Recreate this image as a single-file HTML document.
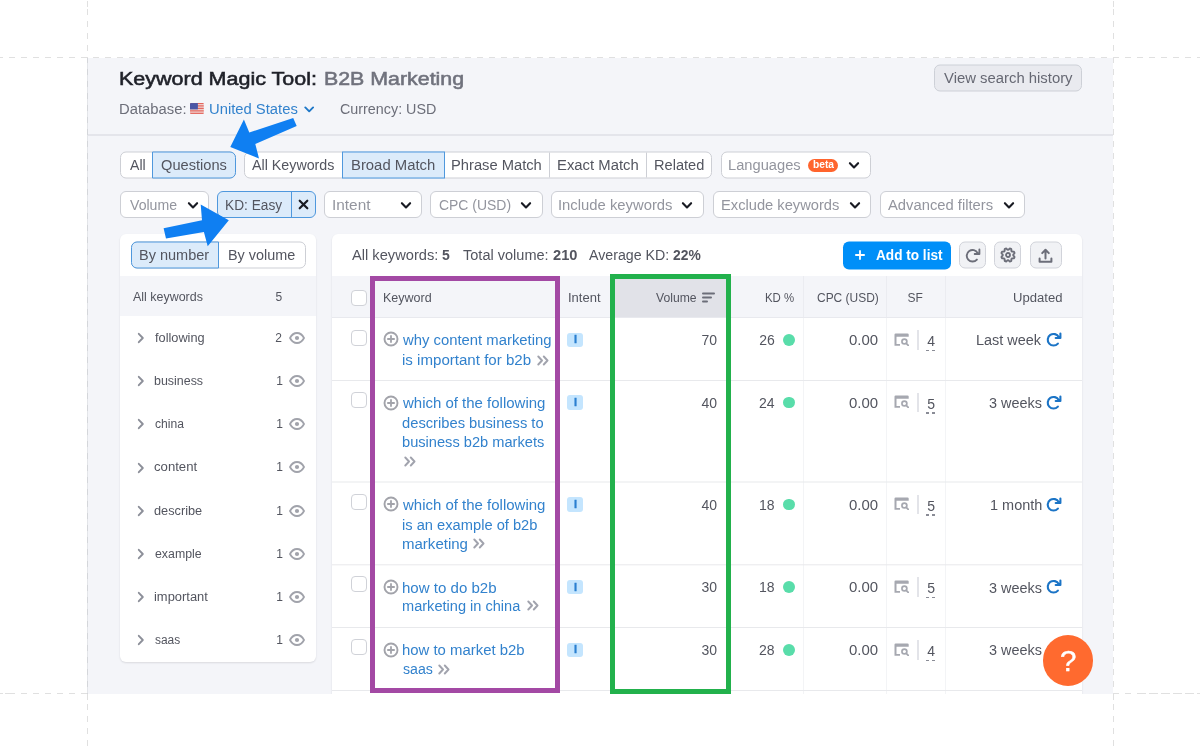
<!DOCTYPE html>
<html lang="en"><head><meta charset="utf-8"><title>Keyword Magic Tool: B2B Marketing</title>
<style>
html,body{margin:0;padding:0;background:#fff;}
body{width:1200px;height:752px;position:relative;overflow:hidden;font-family:"Liberation Sans",sans-serif;}
.root{position:absolute;left:0;top:0;width:1200px;height:752px;will-change:transform;}
.b{position:absolute;box-sizing:border-box;display:block;}
.t{position:absolute;white-space:nowrap;line-height:1;}

.in{background:#fff;border:1px solid #cdcfd5;border-radius:6px;}
.act{background:#dcebfa;border:1px solid #4f98dd;}
.sep{background:#cdcfd5;width:1px;}

</style></head><body><div class="root">
<div class="b" style="left:0px;top:57px;width:1200px;height:1px;background:repeating-linear-gradient(90deg,#e0e0e0 0 6px,transparent 6px 12px);background-position:9px 0;"></div>
<div class="b" style="left:0px;top:693px;width:1200px;height:1px;background:repeating-linear-gradient(90deg,#e0e0e0 0 6px,transparent 6px 12px);background-position:9px 0;"></div>
<div class="b" style="left:87px;top:0px;width:1px;height:752px;background:repeating-linear-gradient(180deg,#e0e0e0 0 6px,transparent 6px 12px);background-position:0 9px;"></div>
<div class="b" style="left:1113px;top:0px;width:1px;height:752px;background:repeating-linear-gradient(180deg,#e0e0e0 0 6px,transparent 6px 12px);background-position:0 9px;"></div>
<div class="b" style="left:87px;top:58px;width:1px;height:636px;background:rgba(200,203,212,.5);"></div>
<div class="b" style="left:88px;top:58px;width:1025px;height:636px;background:#f4f5f9;"></div>
<div class="b" style="left:88px;top:134px;width:1025px;height:2px;background:#e4e5eb;"></div>
<span class="t " style="top:69.76px;font-size:18px;color:#1f2129;left:119.18px;transform:scaleX(1.1941);transform-origin:0 0;-webkit-text-stroke:0.55px #1f2129;">Keyword Magic Tool:</span>
<span class="t " style="top:69.76px;font-size:18px;color:#70727d;left:323.59px;transform:scaleX(1.1865);transform-origin:0 0;-webkit-text-stroke:0.55px #70727d;">B2B Marketing</span>
<span class="t " style="top:102.35px;font-size:14px;color:#6c6e79;left:118.82px;transform:scaleX(1.0576);transform-origin:0 0;">Database:</span>
<svg class="b" style="left:190.3px;top:103.3px;border-radius:1px;" width="13.8" height="11" viewBox="0 0 14 11"><rect width="14" height="11" fill="#f3f3f3"/><rect y="0.00" width="14" height="0.95" fill="#e25950"/><rect y="1.70" width="14" height="0.95" fill="#e25950"/><rect y="3.40" width="14" height="0.95" fill="#e25950"/><rect y="5.10" width="14" height="0.95" fill="#e25950"/><rect y="6.80" width="14" height="0.95" fill="#e25950"/><rect y="8.50" width="14" height="0.95" fill="#e25950"/><rect y="10.20" width="14" height="0.95" fill="#e25950"/><rect width="8" height="6.4" fill="#4a56a6"/></svg>
<span class="t " style="top:102.35px;font-size:14px;color:#3282cd;left:208.71px;transform:scaleX(1.0563);transform-origin:0 0;">United States</span>
<svg class="b" style="left:304px;top:105.6px;" width="10.4" height="7" viewBox="0 0 10.4 7"><path d="M1.3 1.4 L5.2 5.3 L9.1 1.4" fill="none" stroke="#1f78c8" stroke-width="1.9" stroke-linecap="round" stroke-linejoin="round"/></svg>
<span class="t " style="top:102.35px;font-size:14px;color:#6c6e79;left:340.28px;transform:scaleX(1.0235);transform-origin:0 0;">Currency: USD</span>
<div class="b" style="left:934px;top:64px;width:148px;height:27px;background:#e9eaef;border:1px solid #cdd0d7;border-radius:6px;transform:translateY(.5px);"></div>
<span class="t " style="top:70.65px;font-size:14px;color:#666873;left:944.0px;transform:scaleX(1.0611);transform-origin:0 0;">View search history</span>
<div class="b in" style="left:120px;top:151px;width:116px;height:27px;transform:translateY(.5px);"></div>
<div class="b act" style="left:152px;top:151px;width:84px;height:27px;border-radius:0 6px 6px 0;transform:translateY(.5px);"></div>
<span class="t " style="top:157.65px;font-size:14px;color:#53555f;left:129.6px;transform:scaleX(1.0068);transform-origin:0 0;">All</span>
<span class="t " style="top:157.65px;font-size:14px;color:#53555f;left:161.01px;transform:scaleX(1.0448);transform-origin:0 0;">Questions</span>
<div class="b in" style="left:244px;top:151px;width:468px;height:27px;transform:translateY(.5px);"></div>
<div class="b act" style="left:342px;top:151px;width:102.5px;height:27px;transform:translateY(.5px);"></div>
<div class="b sep" style="left:549px;top:152px;width:1px;height:25px;transform:translateY(.5px);"></div>
<div class="b sep" style="left:646px;top:152px;width:1px;height:25px;transform:translateY(.5px);"></div>
<span class="t " style="top:157.65px;font-size:14px;color:#53555f;left:252.4px;transform:scaleX(1.0186);transform-origin:0 0;">All Keywords</span>
<span class="t " style="top:157.65px;font-size:14px;color:#53555f;left:351.21px;transform:scaleX(1.0611);transform-origin:0 0;">Broad Match</span>
<span class="t " style="top:157.65px;font-size:14px;color:#53555f;left:450.82px;transform:scaleX(1.0513);transform-origin:0 0;">Phrase Match</span>
<span class="t " style="top:157.65px;font-size:14px;color:#53555f;left:556.81px;transform:scaleX(1.0608);transform-origin:0 0;">Exact Match</span>
<span class="t " style="top:157.65px;font-size:14px;color:#53555f;left:654.23px;transform:scaleX(1.0433);transform-origin:0 0;">Related</span>
<div class="b in" style="left:721px;top:151px;width:149.5px;height:27px;transform:translateY(.5px);"></div>
<span class="t " style="top:157.65px;font-size:14px;color:#93959e;left:728.22px;transform:scaleX(1.0493);transform-origin:0 0;">Languages</span>
<div class="b" style="left:808.4px;top:158.5px;width:30.0px;height:13.3px;background:#ff642d;border-radius:7px;"></div>
<span class="t " style="top:160.44px;font-size:10px;color:#fff;font-weight:700;left:812.59px;transform:scaleX(1.0249);transform-origin:0 0;">beta</span>
<svg class="b" style="left:848px;top:160.8px;" width="12" height="9" viewBox="0 0 12 9"><path d="M1.9 2.2 L6 6.4 L10.1 2.2" fill="none" stroke="#191b23" stroke-width="2.1" stroke-linecap="round" stroke-linejoin="round"/></svg>
<div class="b in" style="left:120px;top:191px;width:88.6px;height:27px;"></div>
<span class="t " style="top:197.65px;font-size:14px;color:#93959e;left:129.6px;transform:scaleX(1.0074);transform-origin:0 0;">Volume</span>
<svg class="b" style="left:186.7px;top:200.8px;" width="12" height="9" viewBox="0 0 12 9"><path d="M1.9 2.2 L6 6.4 L10.1 2.2" fill="none" stroke="#191b23" stroke-width="2.1" stroke-linecap="round" stroke-linejoin="round"/></svg>
<div class="b act" style="left:217px;top:191px;width:99px;height:27px;border-radius:6px;"></div>
<div class="b" style="left:291px;top:191px;width:1px;height:27px;background:#4f98dd;"></div>
<span class="t " style="top:197.65px;font-size:14px;color:#53555f;left:225.3px;transform:scaleX(0.978);transform-origin:0 0;">KD: Easy</span>
<svg class="b" style="left:298px;top:199.1px;" width="11" height="11" viewBox="0 0 11 11"><path d="M1.7 1.7 L9.3 9.3 M9.3 1.7 L1.7 9.3" stroke="#191b23" stroke-width="2.2" stroke-linecap="round"/></svg>
<div class="b in" style="left:324.2px;top:191px;width:97.8px;height:27px;"></div>
<span class="t " style="top:197.65px;font-size:14px;color:#93959e;left:332.12px;transform:scaleX(1.0982);transform-origin:0 0;">Intent</span>
<svg class="b" style="left:399.6px;top:200.8px;" width="12" height="9" viewBox="0 0 12 9"><path d="M1.9 2.2 L6 6.4 L10.1 2.2" fill="none" stroke="#191b23" stroke-width="2.1" stroke-linecap="round" stroke-linejoin="round"/></svg>
<div class="b in" style="left:430.4px;top:191px;width:112.3px;height:27px;"></div>
<span class="t " style="top:197.65px;font-size:14px;color:#93959e;left:438.9px;transform:scaleX(0.9958);transform-origin:0 0;">CPC (USD)</span>
<svg class="b" style="left:520px;top:200.8px;" width="12" height="9" viewBox="0 0 12 9"><path d="M1.9 2.2 L6 6.4 L10.1 2.2" fill="none" stroke="#191b23" stroke-width="2.1" stroke-linecap="round" stroke-linejoin="round"/></svg>
<div class="b in" style="left:551px;top:191px;width:153.4px;height:27px;"></div>
<span class="t " style="top:197.65px;font-size:14px;color:#93959e;left:558.27px;transform:scaleX(1.0588);transform-origin:0 0;">Include keywords</span>
<svg class="b" style="left:681.4px;top:200.8px;" width="12" height="9" viewBox="0 0 12 9"><path d="M1.9 2.2 L6 6.4 L10.1 2.2" fill="none" stroke="#191b23" stroke-width="2.1" stroke-linecap="round" stroke-linejoin="round"/></svg>
<div class="b in" style="left:713px;top:191px;width:158px;height:27px;"></div>
<span class="t " style="top:197.65px;font-size:14px;color:#93959e;left:720.73px;transform:scaleX(1.0485);transform-origin:0 0;">Exclude keywords</span>
<svg class="b" style="left:849px;top:200.8px;" width="12" height="9" viewBox="0 0 12 9"><path d="M1.9 2.2 L6 6.4 L10.1 2.2" fill="none" stroke="#191b23" stroke-width="2.1" stroke-linecap="round" stroke-linejoin="round"/></svg>
<div class="b in" style="left:880px;top:191px;width:145px;height:27px;"></div>
<span class="t " style="top:197.65px;font-size:14px;color:#93959e;left:888.4px;transform:scaleX(1.0553);transform-origin:0 0;">Advanced filters</span>
<svg class="b" style="left:1003px;top:200.8px;" width="12" height="9" viewBox="0 0 12 9"><path d="M1.9 2.2 L6 6.4 L10.1 2.2" fill="none" stroke="#191b23" stroke-width="2.1" stroke-linecap="round" stroke-linejoin="round"/></svg>
<div class="b" style="left:120px;top:234px;width:196px;height:427.5px;background:#fff;border-radius:6px;box-shadow:0 1px 2px rgba(25,27,35,.12);"></div>
<div class="b in" style="left:131px;top:241px;width:175px;height:27px;transform:translateY(.5px);"></div>
<div class="b act" style="left:131px;top:241px;width:87.9px;height:27px;border-radius:6px 0 0 6px;transform:translateY(.5px);"></div>
<span class="t " style="top:247.95px;font-size:14px;color:#53555f;left:139.24px;transform:scaleX(1.0368);transform-origin:0 0;">By number</span>
<span class="t " style="top:247.95px;font-size:14px;color:#53555f;left:228.05px;transform:scaleX(1.0289);transform-origin:0 0;">By volume</span>
<div class="b" style="left:120px;top:276px;width:196px;height:40px;background:#f4f5f9;"></div>
<span class="t " style="top:290.84px;font-size:12px;color:#53555f;left:133.0px;transform:scaleX(1.0379);transform-origin:0 0;">All keywords</span>
<span class="t " style="top:290.84px;font-size:12px;color:#53555f;left:275.39px;">5</span>
<svg class="b" style="left:136.6px;top:332.2px;" width="8" height="12" viewBox="0 0 8 12"><path d="M1.8 1.8 L5.8 6 L1.8 10.2" fill="none" stroke="#8c8f99" stroke-width="1.9" stroke-linecap="round" stroke-linejoin="round"/></svg>
<span class="t " style="top:332.04px;font-size:12px;color:#53555f;left:154.87px;transform:scaleX(1.063);transform-origin:0 0;">following</span>
<span class="t " style="top:332.04px;font-size:12px;color:#53555f;left:275.29px;">2</span>
<svg class="b" style="left:288.5px;top:332.0px;" width="16" height="12" viewBox="0 0 16 12"><path d="M1 6 C3 2.2 6 1 8 1 C10 1 13 2.2 15 6 C13 9.8 10 11 8 11 C6 11 3 9.8 1 6 Z" fill="none" stroke="#a1a3ab" stroke-width="1.8"/><circle cx="8" cy="6" r="2.1" fill="#a1a3ab"/></svg>
<svg class="b" style="left:136.6px;top:375.34px;" width="8" height="12" viewBox="0 0 8 12"><path d="M1.8 1.8 L5.8 6 L1.8 10.2" fill="none" stroke="#8c8f99" stroke-width="1.9" stroke-linecap="round" stroke-linejoin="round"/></svg>
<span class="t " style="top:375.18px;font-size:12px;color:#53555f;left:154.25px;transform:scaleX(1.0363);transform-origin:0 0;">business</span>
<span class="t " style="top:375.18px;font-size:12px;color:#53555f;left:276.17px;">1</span>
<svg class="b" style="left:288.5px;top:375.14px;" width="16" height="12" viewBox="0 0 16 12"><path d="M1 6 C3 2.2 6 1 8 1 C10 1 13 2.2 15 6 C13 9.8 10 11 8 11 C6 11 3 9.8 1 6 Z" fill="none" stroke="#a1a3ab" stroke-width="1.8"/><circle cx="8" cy="6" r="2.1" fill="#a1a3ab"/></svg>
<svg class="b" style="left:136.6px;top:418.48px;" width="8" height="12" viewBox="0 0 8 12"><path d="M1.8 1.8 L5.8 6 L1.8 10.2" fill="none" stroke="#8c8f99" stroke-width="1.9" stroke-linecap="round" stroke-linejoin="round"/></svg>
<span class="t " style="top:418.32px;font-size:12px;color:#53555f;left:154.51px;transform:scaleX(1.0106);transform-origin:0 0;">china</span>
<span class="t " style="top:418.32px;font-size:12px;color:#53555f;left:276.17px;">1</span>
<svg class="b" style="left:288.5px;top:418.28px;" width="16" height="12" viewBox="0 0 16 12"><path d="M1 6 C3 2.2 6 1 8 1 C10 1 13 2.2 15 6 C13 9.8 10 11 8 11 C6 11 3 9.8 1 6 Z" fill="none" stroke="#a1a3ab" stroke-width="1.8"/><circle cx="8" cy="6" r="2.1" fill="#a1a3ab"/></svg>
<svg class="b" style="left:136.6px;top:461.62px;" width="8" height="12" viewBox="0 0 8 12"><path d="M1.8 1.8 L5.8 6 L1.8 10.2" fill="none" stroke="#8c8f99" stroke-width="1.9" stroke-linecap="round" stroke-linejoin="round"/></svg>
<span class="t " style="top:461.46px;font-size:12px;color:#53555f;left:154.47px;transform:scaleX(1.0965);transform-origin:0 0;">content</span>
<span class="t " style="top:461.46px;font-size:12px;color:#53555f;left:276.17px;">1</span>
<svg class="b" style="left:288.5px;top:461.42px;" width="16" height="12" viewBox="0 0 16 12"><path d="M1 6 C3 2.2 6 1 8 1 C10 1 13 2.2 15 6 C13 9.8 10 11 8 11 C6 11 3 9.8 1 6 Z" fill="none" stroke="#a1a3ab" stroke-width="1.8"/><circle cx="8" cy="6" r="2.1" fill="#a1a3ab"/></svg>
<svg class="b" style="left:136.6px;top:504.76px;" width="8" height="12" viewBox="0 0 8 12"><path d="M1.8 1.8 L5.8 6 L1.8 10.2" fill="none" stroke="#8c8f99" stroke-width="1.9" stroke-linecap="round" stroke-linejoin="round"/></svg>
<span class="t " style="top:504.6px;font-size:12px;color:#53555f;left:154.49px;transform:scaleX(1.0614);transform-origin:0 0;">describe</span>
<span class="t " style="top:504.6px;font-size:12px;color:#53555f;left:276.17px;">1</span>
<svg class="b" style="left:288.5px;top:504.56px;" width="16" height="12" viewBox="0 0 16 12"><path d="M1 6 C3 2.2 6 1 8 1 C10 1 13 2.2 15 6 C13 9.8 10 11 8 11 C6 11 3 9.8 1 6 Z" fill="none" stroke="#a1a3ab" stroke-width="1.8"/><circle cx="8" cy="6" r="2.1" fill="#a1a3ab"/></svg>
<svg class="b" style="left:136.6px;top:547.9px;" width="8" height="12" viewBox="0 0 8 12"><path d="M1.8 1.8 L5.8 6 L1.8 10.2" fill="none" stroke="#8c8f99" stroke-width="1.9" stroke-linecap="round" stroke-linejoin="round"/></svg>
<span class="t " style="top:547.74px;font-size:12px;color:#53555f;left:154.51px;transform:scaleX(1.0276);transform-origin:0 0;">example</span>
<span class="t " style="top:547.74px;font-size:12px;color:#53555f;left:276.17px;">1</span>
<svg class="b" style="left:288.5px;top:547.7px;" width="16" height="12" viewBox="0 0 16 12"><path d="M1 6 C3 2.2 6 1 8 1 C10 1 13 2.2 15 6 C13 9.8 10 11 8 11 C6 11 3 9.8 1 6 Z" fill="none" stroke="#a1a3ab" stroke-width="1.8"/><circle cx="8" cy="6" r="2.1" fill="#a1a3ab"/></svg>
<svg class="b" style="left:136.6px;top:591.04px;" width="8" height="12" viewBox="0 0 8 12"><path d="M1.8 1.8 L5.8 6 L1.8 10.2" fill="none" stroke="#8c8f99" stroke-width="1.9" stroke-linecap="round" stroke-linejoin="round"/></svg>
<span class="t " style="top:590.88px;font-size:12px;color:#53555f;left:154.22px;transform:scaleX(1.0772);transform-origin:0 0;">important</span>
<span class="t " style="top:590.88px;font-size:12px;color:#53555f;left:276.17px;">1</span>
<svg class="b" style="left:288.5px;top:590.84px;" width="16" height="12" viewBox="0 0 16 12"><path d="M1 6 C3 2.2 6 1 8 1 C10 1 13 2.2 15 6 C13 9.8 10 11 8 11 C6 11 3 9.8 1 6 Z" fill="none" stroke="#a1a3ab" stroke-width="1.8"/><circle cx="8" cy="6" r="2.1" fill="#a1a3ab"/></svg>
<svg class="b" style="left:136.6px;top:634.18px;" width="8" height="12" viewBox="0 0 8 12"><path d="M1.8 1.8 L5.8 6 L1.8 10.2" fill="none" stroke="#8c8f99" stroke-width="1.9" stroke-linecap="round" stroke-linejoin="round"/></svg>
<span class="t " style="top:634.02px;font-size:12px;color:#53555f;left:154.64px;transform:scaleX(0.9959);transform-origin:0 0;">saas</span>
<span class="t " style="top:634.02px;font-size:12px;color:#53555f;left:276.17px;">1</span>
<svg class="b" style="left:288.5px;top:633.98px;" width="16" height="12" viewBox="0 0 16 12"><path d="M1 6 C3 2.2 6 1 8 1 C10 1 13 2.2 15 6 C13 9.8 10 11 8 11 C6 11 3 9.8 1 6 Z" fill="none" stroke="#a1a3ab" stroke-width="1.8"/><circle cx="8" cy="6" r="2.1" fill="#a1a3ab"/></svg>
<div class="b" style="left:332px;top:234px;width:750px;height:466px;background:#fff;border-radius:6px 6px 0 0;box-shadow:0 1px 2px rgba(25,27,35,.12);"></div>
<span class="t " style="top:248.15px;font-size:14px;color:#53555f;left:352.0px;transform:scaleX(1.0468);transform-origin:0 0;">All keywords:</span>
<span class="t " style="top:248.15px;font-size:14px;color:#53555f;font-weight:700;left:441.88px;">5</span>
<span class="t " style="top:248.15px;font-size:14px;color:#53555f;left:463.31px;transform:scaleX(1.0381);transform-origin:0 0;">Total volume:</span>
<span class="t " style="top:248.15px;font-size:14px;color:#53555f;font-weight:700;left:552.56px;transform:scaleX(1.0446);transform-origin:0 0;">210</span>
<span class="t " style="top:248.15px;font-size:14px;color:#53555f;left:589.0px;transform:scaleX(1.0149);transform-origin:0 0;">Average KD:</span>
<span class="t " style="top:248.15px;font-size:14px;color:#53555f;font-weight:700;left:672.58px;transform:scaleX(0.989);transform-origin:0 0;">22%</span>
<div class="b" style="left:843px;top:241px;width:108.4px;height:27.7px;background:#008ff8;border-radius:6px;transform:translateY(.5px);"></div>
<svg class="b" style="left:855px;top:249.9px;" width="10" height="10" viewBox="0 0 10 10"><path d="M5 0.9 V9.1 M0.9 5 H9.1" stroke="#fff" stroke-width="1.8" stroke-linecap="round"/></svg>
<span class="t " style="top:247.85px;font-size:14px;color:#fff;font-weight:700;left:876.13px;transform:scaleX(0.972);transform-origin:0 0;">Add to list</span>
<div class="b" style="left:959.2px;top:241px;width:26.8px;height:27px;background:#f1f2f5;border:1px solid #d1d3da;border-radius:6px;transform:translateY(.5px);"></div>
<div class="b" style="left:994.4px;top:241px;width:27.1px;height:27px;background:#f1f2f5;border:1px solid #d1d3da;border-radius:6px;transform:translateY(.5px);"></div>
<div class="b" style="left:1029.6px;top:241px;width:32.2px;height:27px;background:#f1f2f5;border:1px solid #d1d3da;border-radius:6px;transform:translateY(.5px);"></div>
<svg class="b" style="left:964.7px;top:247.7px;" width="16" height="16" viewBox="0 0 16 16"><path d="M11.9 11.6 A5.8 5.8 0 1 1 12.7 5.1 M14.4 1.5 V6 H9.7" fill="none" stroke="#6c6e79" stroke-width="1.9" stroke-linecap="round" stroke-linejoin="round"/></svg>
<svg class="b" style="left:1000px;top:247.3px;" width="16" height="16" viewBox="0 0 16 16"><path d="M14.28 10.60 L14.18 10.85 L14.06 11.09 L13.86 11.28 L13.45 11.34 L13.03 11.36 L12.61 11.35 L12.23 11.34 L12.03 11.44 L11.89 11.60 L11.75 11.75 L11.60 11.89 L11.44 12.03 L11.34 12.23 L11.35 12.61 L11.36 13.03 L11.34 13.45 L11.28 13.86 L11.09 14.06 L10.85 14.18 L10.60 14.28 L10.35 14.38 L10.10 14.47 L9.82 14.46 L9.49 14.22 L9.18 13.93 L8.89 13.63 L8.63 13.35 L8.42 13.28 L8.21 13.30 L8.00 13.30 L7.79 13.30 L7.58 13.28 L7.37 13.35 L7.11 13.63 L6.82 13.93 L6.51 14.22 L6.18 14.46 L5.90 14.47 L5.65 14.38 L5.40 14.28 L5.15 14.18 L4.91 14.06 L4.72 13.86 L4.66 13.45 L4.64 13.03 L4.65 12.61 L4.66 12.23 L4.56 12.03 L4.40 11.89 L4.25 11.75 L4.11 11.60 L3.97 11.44 L3.77 11.34 L3.39 11.35 L2.97 11.36 L2.55 11.34 L2.14 11.28 L1.94 11.09 L1.82 10.85 L1.72 10.60 L1.62 10.35 L1.53 10.10 L1.54 9.82 L1.78 9.49 L2.07 9.18 L2.37 8.89 L2.65 8.63 L2.72 8.42 L2.70 8.21 L2.70 8.00 L2.70 7.79 L2.72 7.58 L2.65 7.37 L2.37 7.11 L2.07 6.82 L1.78 6.51 L1.54 6.18 L1.53 5.90 L1.62 5.65 L1.72 5.40 L1.82 5.15 L1.94 4.91 L2.14 4.72 L2.55 4.66 L2.97 4.64 L3.39 4.65 L3.77 4.66 L3.97 4.56 L4.11 4.40 L4.25 4.25 L4.40 4.11 L4.56 3.97 L4.66 3.77 L4.65 3.39 L4.64 2.97 L4.66 2.55 L4.72 2.14 L4.91 1.94 L5.15 1.82 L5.40 1.72 L5.65 1.62 L5.90 1.53 L6.18 1.54 L6.51 1.78 L6.82 2.07 L7.11 2.37 L7.37 2.65 L7.58 2.72 L7.79 2.70 L8.00 2.70 L8.21 2.70 L8.42 2.72 L8.63 2.65 L8.89 2.37 L9.18 2.07 L9.49 1.78 L9.82 1.54 L10.10 1.53 L10.35 1.62 L10.60 1.72 L10.85 1.82 L11.09 1.94 L11.28 2.14 L11.34 2.55 L11.36 2.97 L11.35 3.39 L11.34 3.77 L11.44 3.97 L11.60 4.11 L11.75 4.25 L11.89 4.40 L12.03 4.56 L12.23 4.66 L12.61 4.65 L13.03 4.64 L13.45 4.66 L13.86 4.72 L14.06 4.91 L14.18 5.15 L14.28 5.40 L14.38 5.65 L14.47 5.90 L14.46 6.18 L14.22 6.51 L13.93 6.82 L13.63 7.11 L13.35 7.37 L13.28 7.58 L13.30 7.79 L13.30 8.00 L13.30 8.21 L13.28 8.42 L13.35 8.63 L13.63 8.89 L13.93 9.18 L14.22 9.49 L14.46 9.82 L14.47 10.10 L14.38 10.35 Z" fill="none" stroke="#6c6e79" stroke-width="1.9" stroke-linejoin="round"/><circle cx="8" cy="8" r="2" fill="none" stroke="#6c6e79" stroke-width="1.8"/></svg>
<svg class="b" style="left:1037.5px;top:247.5px;" width="15" height="16" viewBox="0 0 15 16"><path d="M7.5 10.5 V2 M4.2 5.1 L7.5 1.8 L10.8 5.1 M1.6 10.6 V13.8 H13.4 V10.6" fill="none" stroke="#6c6e79" stroke-width="2" stroke-linecap="round" stroke-linejoin="round"/></svg>
<div class="b" style="left:332px;top:276px;width:750px;height:42px;background:#f4f5f9;"></div>
<div class="b" style="left:615px;top:276px;width:111px;height:42px;background:#e1e2e8;"></div>
<span class="t " style="top:291.84px;font-size:12px;color:#53555f;left:382.6px;transform:scaleX(1.0428);transform-origin:0 0;">Keyword</span>
<span class="t " style="top:291.84px;font-size:12px;color:#53555f;left:568.23px;transform:scaleX(1.0833);transform-origin:0 0;">Intent</span>
<span class="t " style="top:291.84px;font-size:12px;color:#53555f;left:656.4px;transform:scaleX(1.0132);transform-origin:0 0;">Volume</span>
<svg class="b" style="left:702px;top:291.5px;" width="13" height="11" viewBox="0 0 13 11"><path d="M1 1.5 H12 M1 5.5 H9 M1 9.5 H5" stroke="#6c6e79" stroke-width="2" stroke-linecap="round"/></svg>
<span class="t " style="top:291.84px;font-size:12px;color:#53555f;left:765.49px;transform:scaleX(0.9524);transform-origin:0 0;">KD %</span>
<span class="t " style="top:291.84px;font-size:12px;color:#53555f;left:817.0px;transform:scaleX(0.9967);transform-origin:0 0;">CPC (USD)</span>
<span class="t " style="top:291.84px;font-size:12px;color:#53555f;left:907.46px;">SF</span>
<span class="t " style="top:291.84px;font-size:12px;color:#53555f;left:1013.08px;transform:scaleX(1.0897);transform-origin:0 0;">Updated</span>
<div class="b" style="left:803px;top:276px;width:1px;height:42px;background:#ebecf1;"></div>
<div class="b" style="left:803px;top:318px;width:1px;height:376px;background:#f3f4f6;"></div>
<div class="b" style="left:886px;top:276px;width:1px;height:42px;background:#ebecf1;"></div>
<div class="b" style="left:886px;top:318px;width:1px;height:376px;background:#f3f4f6;"></div>
<div class="b" style="left:944.8px;top:276px;width:1.0px;height:42px;background:#ebecf1;"></div>
<div class="b" style="left:944.8px;top:318px;width:1.0px;height:376px;background:#f3f4f6;"></div>
<div class="b" style="left:351.3px;top:290.2px;width:15.5px;height:16.0px;background:#fff;border:1px solid #d0d2d8;border-radius:4px;"></div>
<div class="b" style="left:332px;top:317px;width:750px;height:1px;background:#e8e9ee;"></div>
<div class="b" style="left:332px;top:380px;width:750px;height:1px;background:#e8e9ec;"></div>
<div class="b" style="left:351.3px;top:329.7px;width:15.5px;height:16.0px;background:#fff;border:1px solid #d0d2d8;border-radius:4px;"></div>
<svg class="b" style="left:383px;top:330.8px;" width="16" height="16" viewBox="0 0 16 16"><circle cx="8" cy="8" r="6.5" fill="none" stroke="#a2a3aa" stroke-width="1.9"/><path d="M8 4.9 V11.1 M4.9 8 H11.1" stroke="#a2a3aa" stroke-width="1.8" stroke-linecap="round"/></svg>
<span class="t " style="top:333.45px;font-size:14px;color:#3282cd;left:403.0px;transform:scaleX(1.0606);transform-origin:0 0;">why content marketing</span>
<span class="t " style="top:353.25px;font-size:14px;color:#3282cd;left:402.1px;transform:scaleX(1.0773);transform-origin:0 0;">is important for b2b</span>
<svg class="b" style="left:536.6px;top:354.5px;" width="12" height="11" viewBox="0 0 12 11"><path d="M1.3 1.5 L5 5.5 L1.3 9.5 M6.8 1.5 L10.5 5.5 L6.8 9.5" fill="none" stroke="#a1a3ad" stroke-width="1.9" stroke-linecap="round" stroke-linejoin="round"/></svg>
<div class="b" style="left:567.3px;top:332.6px;width:16.0px;height:14.4px;background:#c4e5fe;border-radius:3px;"></div>
<span class="t " style="top:334.39px;font-size:11px;color:#2a7fd0;font-weight:700;left:574.02px;-webkit-text-stroke:0.35px #2a7fd0;">I</span>
<span class="t " style="top:332.95px;font-size:14px;color:#53555f;right:482.95px;">70</span>
<span class="t " style="top:332.95px;font-size:14px;color:#53555f;left:759.16px;">26</span>
<div class="b" style="left:783.1px;top:333.9px;width:11.9px;height:11.9px;background:#59ddaa;border-radius:50%;"></div>
<span class="t " style="top:332.95px;font-size:14px;color:#53555f;left:849.4px;transform:scaleX(1.0695);transform-origin:0 0;">0.00</span>
<svg class="b" style="left:894px;top:332.7px;" width="15" height="13" viewBox="0 0 15 13"><path d="M0.5 1.6 Q0.5 0.4 1.7 0.4 H13.5 Q14.7 0.4 14.7 1.6 V3.7 H2.5 V11 H6 V12.7 H0.5 Z" fill="#a6a8b0"/><circle cx="10.4" cy="8.5" r="2.45" fill="none" stroke="#a6a8b0" stroke-width="1.7"/><path d="M12.2 10.4 L14.2 12.3" stroke="#a6a8b0" stroke-width="1.8" stroke-linecap="round"/></svg>
<div class="b" style="left:917.1px;top:330.1px;width:2.0px;height:19.7px;background:#e3e4e9;"></div>
<span class="t " style="top:333.95px;font-size:14px;color:#53555f;left:927.3px;">4</span>
<div class="b" style="left:926.3px;top:349.5px;width:9.3px;height:1.5px;background:repeating-linear-gradient(90deg,#8a8c96 0 3.3px,transparent 3.3px 6px);"></div>
<span class="t " style="top:333.45px;font-size:14px;color:#53555f;left:976.34px;transform:scaleX(1.0326);transform-origin:0 0;">Last week</span>
<svg class="b" style="left:1046px;top:332.1px;" width="16" height="16" viewBox="0 0 16 16"><path d="M11.9 11.6 A5.8 5.8 0 1 1 12.7 5.1 M14.4 1.5 V6 H9.7" fill="none" stroke="#1b74c6" stroke-width="2.1" stroke-linecap="round" stroke-linejoin="round"/></svg>
<div class="b" style="left:332px;top:481px;width:750px;height:1px;background:#e8e9ec;transform:translateY(0.5px);"></div>
<div class="b" style="left:351.3px;top:391.7px;width:15.5px;height:16.0px;background:#fff;border:1px solid #d0d2d8;border-radius:4px;"></div>
<svg class="b" style="left:383px;top:394.6px;" width="16" height="16" viewBox="0 0 16 16"><circle cx="8" cy="8" r="6.5" fill="none" stroke="#a2a3aa" stroke-width="1.9"/><path d="M8 4.9 V11.1 M4.9 8 H11.1" stroke="#a2a3aa" stroke-width="1.8" stroke-linecap="round"/></svg>
<span class="t " style="top:396.05px;font-size:14px;color:#3282cd;left:403.0px;transform:scaleX(1.0699);transform-origin:0 0;">which of the following</span>
<span class="t " style="top:415.85px;font-size:14px;color:#3282cd;left:402.41px;transform:scaleX(1.052);transform-origin:0 0;">describes business to</span>
<span class="t " style="top:435.35px;font-size:14px;color:#3282cd;left:402.12px;transform:scaleX(1.0448);transform-origin:0 0;">business b2b markets</span>
<svg class="b" style="left:404px;top:455.6px;" width="12" height="11" viewBox="0 0 12 11"><path d="M1.3 1.5 L5 5.5 L1.3 9.5 M6.8 1.5 L10.5 5.5 L6.8 9.5" fill="none" stroke="#a1a3ad" stroke-width="1.9" stroke-linecap="round" stroke-linejoin="round"/></svg>
<div class="b" style="left:567.3px;top:395.2px;width:16.0px;height:14.4px;background:#c4e5fe;border-radius:3px;"></div>
<span class="t " style="top:396.99px;font-size:11px;color:#2a7fd0;font-weight:700;left:574.02px;-webkit-text-stroke:0.35px #2a7fd0;">I</span>
<span class="t " style="top:395.55px;font-size:14px;color:#53555f;right:482.95px;">40</span>
<span class="t " style="top:395.55px;font-size:14px;color:#53555f;left:759.02px;">24</span>
<div class="b" style="left:783.1px;top:396.5px;width:11.9px;height:11.9px;background:#59ddaa;border-radius:50%;"></div>
<span class="t " style="top:395.55px;font-size:14px;color:#53555f;left:849.4px;transform:scaleX(1.0695);transform-origin:0 0;">0.00</span>
<svg class="b" style="left:894px;top:395.3px;" width="15" height="13" viewBox="0 0 15 13"><path d="M0.5 1.6 Q0.5 0.4 1.7 0.4 H13.5 Q14.7 0.4 14.7 1.6 V3.7 H2.5 V11 H6 V12.7 H0.5 Z" fill="#a6a8b0"/><circle cx="10.4" cy="8.5" r="2.45" fill="none" stroke="#a6a8b0" stroke-width="1.7"/><path d="M12.2 10.4 L14.2 12.3" stroke="#a6a8b0" stroke-width="1.8" stroke-linecap="round"/></svg>
<div class="b" style="left:917.1px;top:392.7px;width:2.0px;height:19.7px;background:#e3e4e9;"></div>
<span class="t " style="top:396.55px;font-size:14px;color:#53555f;left:927.23px;">5</span>
<div class="b" style="left:926.3px;top:412.1px;width:9.3px;height:1.5px;background:repeating-linear-gradient(90deg,#8a8c96 0 3.3px,transparent 3.3px 6px);"></div>
<span class="t " style="top:396.05px;font-size:14px;color:#53555f;left:988.92px;transform:scaleX(1.0298);transform-origin:0 0;">3 weeks</span>
<svg class="b" style="left:1046px;top:394.7px;" width="16" height="16" viewBox="0 0 16 16"><path d="M11.9 11.6 A5.8 5.8 0 1 1 12.7 5.1 M14.4 1.5 V6 H9.7" fill="none" stroke="#1b74c6" stroke-width="2.1" stroke-linecap="round" stroke-linejoin="round"/></svg>
<div class="b" style="left:332px;top:564px;width:750px;height:1px;background:#e8e9ec;transform:translateY(0.3px);"></div>
<div class="b" style="left:351.3px;top:493.7px;width:15.5px;height:16.0px;background:#fff;border:1px solid #d0d2d8;border-radius:4px;"></div>
<svg class="b" style="left:383px;top:495.8px;" width="16" height="16" viewBox="0 0 16 16"><circle cx="8" cy="8" r="6.5" fill="none" stroke="#a2a3aa" stroke-width="1.9"/><path d="M8 4.9 V11.1 M4.9 8 H11.1" stroke="#a2a3aa" stroke-width="1.8" stroke-linecap="round"/></svg>
<span class="t " style="top:498.15px;font-size:14px;color:#3282cd;left:403.0px;transform:scaleX(1.0699);transform-origin:0 0;">which of the following</span>
<span class="t " style="top:518.35px;font-size:14px;color:#3282cd;left:402.12px;transform:scaleX(1.0483);transform-origin:0 0;">is an example of b2b</span>
<span class="t " style="top:536.95px;font-size:14px;color:#3282cd;left:402.1px;transform:scaleX(1.0731);transform-origin:0 0;">marketing</span>
<svg class="b" style="left:473px;top:538.2px;" width="12" height="11" viewBox="0 0 12 11"><path d="M1.3 1.5 L5 5.5 L1.3 9.5 M6.8 1.5 L10.5 5.5 L6.8 9.5" fill="none" stroke="#a1a3ad" stroke-width="1.9" stroke-linecap="round" stroke-linejoin="round"/></svg>
<div class="b" style="left:567.3px;top:497.3px;width:16.0px;height:14.4px;background:#c4e5fe;border-radius:3px;"></div>
<span class="t " style="top:499.09px;font-size:11px;color:#2a7fd0;font-weight:700;left:574.02px;-webkit-text-stroke:0.35px #2a7fd0;">I</span>
<span class="t " style="top:497.65px;font-size:14px;color:#53555f;right:482.95px;">40</span>
<span class="t " style="top:497.65px;font-size:14px;color:#53555f;left:758.95px;">18</span>
<div class="b" style="left:783.1px;top:498.6px;width:11.9px;height:11.9px;background:#59ddaa;border-radius:50%;"></div>
<span class="t " style="top:497.65px;font-size:14px;color:#53555f;left:849.4px;transform:scaleX(1.0695);transform-origin:0 0;">0.00</span>
<svg class="b" style="left:894px;top:497.4px;" width="15" height="13" viewBox="0 0 15 13"><path d="M0.5 1.6 Q0.5 0.4 1.7 0.4 H13.5 Q14.7 0.4 14.7 1.6 V3.7 H2.5 V11 H6 V12.7 H0.5 Z" fill="#a6a8b0"/><circle cx="10.4" cy="8.5" r="2.45" fill="none" stroke="#a6a8b0" stroke-width="1.7"/><path d="M12.2 10.4 L14.2 12.3" stroke="#a6a8b0" stroke-width="1.8" stroke-linecap="round"/></svg>
<div class="b" style="left:917.1px;top:494.8px;width:2.0px;height:19.7px;background:#e3e4e9;"></div>
<span class="t " style="top:498.65px;font-size:14px;color:#53555f;left:927.23px;">5</span>
<div class="b" style="left:926.3px;top:514.2px;width:9.3px;height:1.5px;background:repeating-linear-gradient(90deg,#8a8c96 0 3.3px,transparent 3.3px 6px);"></div>
<span class="t " style="top:498.15px;font-size:14px;color:#53555f;left:989.99px;transform:scaleX(1.0345);transform-origin:0 0;">1 month</span>
<svg class="b" style="left:1046px;top:496.8px;" width="16" height="16" viewBox="0 0 16 16"><path d="M11.9 11.6 A5.8 5.8 0 1 1 12.7 5.1 M14.4 1.5 V6 H9.7" fill="none" stroke="#1b74c6" stroke-width="2.1" stroke-linecap="round" stroke-linejoin="round"/></svg>
<div class="b" style="left:332px;top:627px;width:750px;height:1px;background:#e8e9ec;"></div>
<div class="b" style="left:351.3px;top:576.2px;width:15.5px;height:16.0px;background:#fff;border:1px solid #d0d2d8;border-radius:4px;"></div>
<svg class="b" style="left:383px;top:578.7px;" width="16" height="16" viewBox="0 0 16 16"><circle cx="8" cy="8" r="6.5" fill="none" stroke="#a2a3aa" stroke-width="1.9"/><path d="M8 4.9 V11.1 M4.9 8 H11.1" stroke="#a2a3aa" stroke-width="1.8" stroke-linecap="round"/></svg>
<span class="t " style="top:580.65px;font-size:14px;color:#3282cd;left:401.95px;transform:scaleX(1.0749);transform-origin:0 0;">how to do b2b</span>
<span class="t " style="top:599.15px;font-size:14px;color:#3282cd;left:402.13px;transform:scaleX(1.0413);transform-origin:0 0;">marketing in china</span>
<svg class="b" style="left:526.5px;top:600.4px;" width="12" height="11" viewBox="0 0 12 11"><path d="M1.3 1.5 L5 5.5 L1.3 9.5 M6.8 1.5 L10.5 5.5 L6.8 9.5" fill="none" stroke="#a1a3ad" stroke-width="1.9" stroke-linecap="round" stroke-linejoin="round"/></svg>
<div class="b" style="left:567.3px;top:579.8px;width:16.0px;height:14.4px;background:#c4e5fe;border-radius:3px;"></div>
<span class="t " style="top:581.59px;font-size:11px;color:#2a7fd0;font-weight:700;left:574.02px;-webkit-text-stroke:0.35px #2a7fd0;">I</span>
<span class="t " style="top:580.15px;font-size:14px;color:#53555f;right:482.95px;">30</span>
<span class="t " style="top:580.15px;font-size:14px;color:#53555f;left:758.95px;">18</span>
<div class="b" style="left:783.1px;top:581.1px;width:11.9px;height:11.9px;background:#59ddaa;border-radius:50%;"></div>
<span class="t " style="top:580.15px;font-size:14px;color:#53555f;left:849.4px;transform:scaleX(1.0695);transform-origin:0 0;">0.00</span>
<svg class="b" style="left:894px;top:579.9px;" width="15" height="13" viewBox="0 0 15 13"><path d="M0.5 1.6 Q0.5 0.4 1.7 0.4 H13.5 Q14.7 0.4 14.7 1.6 V3.7 H2.5 V11 H6 V12.7 H0.5 Z" fill="#a6a8b0"/><circle cx="10.4" cy="8.5" r="2.45" fill="none" stroke="#a6a8b0" stroke-width="1.7"/><path d="M12.2 10.4 L14.2 12.3" stroke="#a6a8b0" stroke-width="1.8" stroke-linecap="round"/></svg>
<div class="b" style="left:917.1px;top:577.3px;width:2.0px;height:19.7px;background:#e3e4e9;"></div>
<span class="t " style="top:581.15px;font-size:14px;color:#53555f;left:927.23px;">5</span>
<div class="b" style="left:926.3px;top:596.7px;width:9.3px;height:1.5px;background:repeating-linear-gradient(90deg,#8a8c96 0 3.3px,transparent 3.3px 6px);"></div>
<span class="t " style="top:580.65px;font-size:14px;color:#53555f;left:988.92px;transform:scaleX(1.0298);transform-origin:0 0;">3 weeks</span>
<svg class="b" style="left:1046px;top:579.3px;" width="16" height="16" viewBox="0 0 16 16"><path d="M11.9 11.6 A5.8 5.8 0 1 1 12.7 5.1 M14.4 1.5 V6 H9.7" fill="none" stroke="#1b74c6" stroke-width="2.1" stroke-linecap="round" stroke-linejoin="round"/></svg>
<div class="b" style="left:332px;top:690px;width:750px;height:1px;background:#e8e9ec;"></div>
<div class="b" style="left:351.3px;top:638.7px;width:15.5px;height:16.0px;background:#fff;border:1px solid #d0d2d8;border-radius:4px;"></div>
<svg class="b" style="left:383px;top:642.0px;" width="16" height="16" viewBox="0 0 16 16"><circle cx="8" cy="8" r="6.5" fill="none" stroke="#a2a3aa" stroke-width="1.9"/><path d="M8 4.9 V11.1 M4.9 8 H11.1" stroke="#a2a3aa" stroke-width="1.8" stroke-linecap="round"/></svg>
<span class="t " style="top:643.45px;font-size:14px;color:#3282cd;left:401.96px;transform:scaleX(1.0644);transform-origin:0 0;">how to market b2b</span>
<span class="t " style="top:662.35px;font-size:14px;color:#3282cd;left:402.58px;transform:scaleX(1.0105);transform-origin:0 0;">saas</span>
<svg class="b" style="left:438px;top:663.6px;" width="12" height="11" viewBox="0 0 12 11"><path d="M1.3 1.5 L5 5.5 L1.3 9.5 M6.8 1.5 L10.5 5.5 L6.8 9.5" fill="none" stroke="#a1a3ad" stroke-width="1.9" stroke-linecap="round" stroke-linejoin="round"/></svg>
<div class="b" style="left:567.3px;top:642.6px;width:16.0px;height:14.4px;background:#c4e5fe;border-radius:3px;"></div>
<span class="t " style="top:644.39px;font-size:11px;color:#2a7fd0;font-weight:700;left:574.02px;-webkit-text-stroke:0.35px #2a7fd0;">I</span>
<span class="t " style="top:642.95px;font-size:14px;color:#53555f;right:482.95px;">30</span>
<span class="t " style="top:642.95px;font-size:14px;color:#53555f;left:759.09px;">28</span>
<div class="b" style="left:783.1px;top:643.9px;width:11.9px;height:11.9px;background:#59ddaa;border-radius:50%;"></div>
<span class="t " style="top:642.95px;font-size:14px;color:#53555f;left:849.4px;transform:scaleX(1.0695);transform-origin:0 0;">0.00</span>
<svg class="b" style="left:894px;top:642.7px;" width="15" height="13" viewBox="0 0 15 13"><path d="M0.5 1.6 Q0.5 0.4 1.7 0.4 H13.5 Q14.7 0.4 14.7 1.6 V3.7 H2.5 V11 H6 V12.7 H0.5 Z" fill="#a6a8b0"/><circle cx="10.4" cy="8.5" r="2.45" fill="none" stroke="#a6a8b0" stroke-width="1.7"/><path d="M12.2 10.4 L14.2 12.3" stroke="#a6a8b0" stroke-width="1.8" stroke-linecap="round"/></svg>
<div class="b" style="left:917.1px;top:640.1px;width:2.0px;height:19.7px;background:#e3e4e9;"></div>
<span class="t " style="top:643.95px;font-size:14px;color:#53555f;left:927.3px;">4</span>
<div class="b" style="left:926.3px;top:659.5px;width:9.3px;height:1.5px;background:repeating-linear-gradient(90deg,#8a8c96 0 3.3px,transparent 3.3px 6px);"></div>
<span class="t " style="top:643.45px;font-size:14px;color:#53555f;left:988.92px;transform:scaleX(1.0298);transform-origin:0 0;">3 weeks</span>
<svg class="b" style="left:1046px;top:642.1px;" width="16" height="16" viewBox="0 0 16 16"><path d="M11.9 11.6 A5.8 5.8 0 1 1 12.7 5.1 M14.4 1.5 V6 H9.7" fill="none" stroke="#1b74c6" stroke-width="2.1" stroke-linecap="round" stroke-linejoin="round"/></svg>
<div class="b" style="left:370.1px;top:275.8px;width:189.6px;height:416.8px;border:5.2px solid #a349a4;"></div>
<div class="b" style="left:610px;top:273.5px;width:121px;height:420.1px;border:5.1px solid #22b14c;"></div>
<div class="b" style="left:0px;top:694px;width:1200px;height:58px;background:#fff;"></div>
<div class="b" style="left:0px;top:693px;width:88px;height:1px;background:repeating-linear-gradient(90deg,#e0e0e0 0 6px,transparent 6px 12px);background-position:9px 0;"></div>
<div class="b" style="left:1113px;top:693px;width:87px;height:1px;background:repeating-linear-gradient(90deg,#e0e0e0 0 6px,transparent 6px 12px);background-position:-1104px 0;"></div>
<div class="b" style="left:87px;top:694px;width:1px;height:58px;background:repeating-linear-gradient(180deg,#e0e0e0 0 6px,transparent 6px 12px);background-position:0 -686px;"></div>
<div class="b" style="left:1113px;top:694px;width:1px;height:58px;background:repeating-linear-gradient(180deg,#e0e0e0 0 6px,transparent 6px 12px);background-position:0 -686px;"></div>
<svg class="b" style="left:0px;top:0px;pointer-events:none;" width="1200" height="752" viewBox="0 0 1200 752"><polygon fill="#0f7ff2" points="293.2,117.9 296.7,126 255.3,143.9 259,158.5 230.3,147.1 243.9,119.5 249.3,132.5"/><polygon fill="#0f7ff2" points="163.6,228.3 166,238.6 203.9,232.1 207.7,246.2 228.8,220.2 200.7,204.5 202,220.2"/></svg>
<div class="b" style="left:1042.5px;top:635px;width:50.8px;height:51.3px;background:#ff6a2f;border-radius:50%;"></div>
<span class="t " style="top:645.63px;font-size:29.5px;color:#fff;left:1059.94px;-webkit-text-stroke:0.4px #fff;">?</span>
</div></body></html>
